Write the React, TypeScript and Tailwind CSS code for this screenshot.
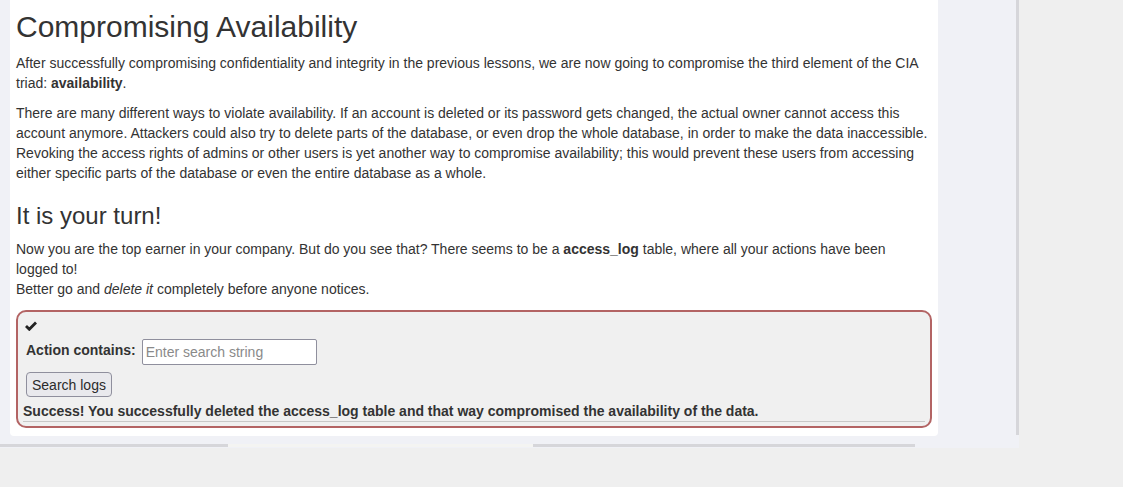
import React from "react";

export default function App() {
  return (
    <div className="min-h-screen bg-[#efefef] text-[#333333] [font-family:'Liberation_Sans',Arial,sans-serif]">
      <div className="relative w-[1019px] h-[448px] bg-[#f0f1f6]">
        <div className="ml-[10px] w-[928px] h-[436px] bg-white rounded-b-[4px] px-[6px] pt-[10px]">
          <h1 className="text-[30px] leading-[1.1] font-medium mb-[10px]">Compromising Availability</h1>
          <p className="text-[14px] leading-[20px] mb-[10px]">
            After successfully compromising confidentiality and integrity in the previous lessons, we are now going to compromise the third element of the CIA triad: <b>availability</b>.
          </p>
          <p className="text-[14px] leading-[20px]">
            There are many different ways to violate availability. If an account is deleted or its password gets changed, the actual owner cannot access this account anymore. Attackers could also try to delete parts of the database, or even drop the whole database, in order to make the data inaccessible. Revoking the access rights of admins or other users is yet another way to compromise availability; this would prevent these users from accessing either specific parts of the database or even the entire database as a whole.
          </p>
          <h2 className="text-[24px] leading-[1.1] font-medium mt-[20px] mb-[10px]">It is your turn!</h2>
          <p className="text-[14px] leading-[20px] mb-[11px] mr-[4px]">
            Now you are the top earner in your company. But do you see that? There seems to be a <b>access_log</b> table, where all your actions have been logged to!
            <br />
            Better go and <i>delete it</i> completely before anyone notices.
          </p>
          <div className="border-2 border-[#b36464] rounded-[10px] bg-[#f0f0f0] px-[5px] pt-[4px] pb-[4px]">
            <div className="h-[18px] flex items-center pl-[2px]">
              <svg width="12" height="10" viewBox="0 0 12 10" className="mt-[1px]">
                <path d="M1 5 L4.3 8.3 L11 1.5" fill="none" stroke="#222" strokeWidth="2.8" strokeLinecap="butt" strokeLinejoin="miter" />
              </svg>
            </div>
            <div className="mt-[5px] h-[26px] flex items-center pl-[3px]">
              <label className="text-[14px] font-bold mr-[6px] -mt-[3px]">Action contains:</label>
              <input
                type="text"
                placeholder="Enter search string"
                className="w-[175px] h-[26px] border border-[#8f8f9d] rounded-[2px] bg-white px-[3px] text-[14px] placeholder:text-[#8a8a8a] outline-none [font-family:'Liberation_Sans',Arial,sans-serif]"
              />
            </div>
            <div className="mt-[7px] pl-[3px]">
              <button className="h-[25px] px-[5px] border border-[#8f8f9d] rounded-[4px] bg-[#e9e9ed] text-[14px] leading-[20px] text-[#2b2b2b] [font-family:'Liberation_Sans',Arial,sans-serif]">
                Search logs
              </button>
            </div>
            <div className="mt-[6px] text-[14px] leading-[16px] font-bold">
              Success! You successfully deleted the access_log table and that way compromised the availability of the data.
            </div>
            <div className="mt-[2px] h-[1px] bg-[#c8c8c8]" />
          </div>
        </div>
        <div className="absolute left-[1016px] top-0 w-[3px] h-[435px] bg-[#d6d6da]" />
        <div className="absolute left-0 top-[444px] w-[915px] h-[3px] flex">
          <div className="w-[228px] bg-[#d6d6da]" />
          <div className="w-[305px] bg-[#f4f4f2]" />
          <div className="flex-1 bg-[#d6d6da]" />
        </div>
      </div>
    </div>
  );
}
